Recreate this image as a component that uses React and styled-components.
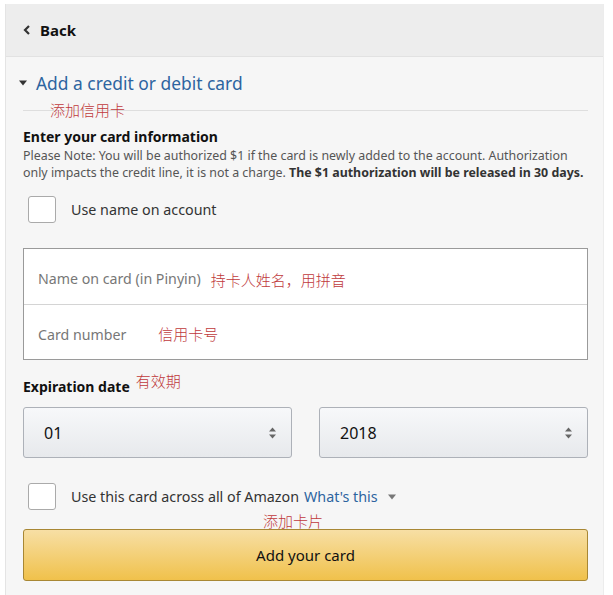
import React from "react";
import styled, { createGlobalStyle } from "styled-components";

const Global = createGlobalStyle`
  html, body { margin: 0; padding: 0; background: #fff; }
  body { font-family: "Noto Sans", "Noto Sans CJK SC", sans-serif; color: #111; }
  * { box-sizing: border-box; }
`;

const Panel = styled.div`
  margin: 4px 0 0 5px;
  width: 599px;
  min-height: 591px;
  background: #f6f6f6;
  border-left: 1px solid #e4e4e4;
  border-right: 1px solid #ececec;
  display: flex;
  flex-direction: column;
`;

const Header = styled.div`
  flex: none;
  height: 53px;
  background: #ededed;
  border-bottom: 1px solid #e2e2e2;
  display: flex;
  align-items: center;
  padding-left: 17px;
  gap: 9px;
  font-size: 15px;
  font-weight: 700;
  color: #111;
`;

const Body = styled.div`
  padding: 0 15px 0 17px;
  display: flex;
  flex-direction: column;
`;

const Title = styled.div`
  margin: 14px 0 0 -4px;
  height: 24px;
  display: flex;
  align-items: center;
  gap: 9px;
  font-size: 17.4px;
  color: #2d64a0;
`;

const Divider = styled.div`
  position: relative;
  margin-top: 15px;
  height: 1px;
  background: #dedede;
`;

const Note = styled.span`
  position: absolute;
  color: #c0393b;
  font-family: "Noto Sans CJK SC", sans-serif;
  font-weight: 300;
  font-size: 15px;
  line-height: 18px;
  white-space: nowrap;
  left: ${(p) => p.$left}px;
  top: ${(p) => p.$top}px;
`;

const InlineNote = styled.span`
  color: #c0393b;
  font-family: "Noto Sans CJK SC", sans-serif;
  font-weight: 300;
  font-size: 15px;
  margin-left: ${(p) => p.$ml}px;
  position: relative;
  top: ${(p) => p.$dy || 0}px;
`;

const SectionHead = styled.div`
  margin-top: ${(p) => (p.$mt === undefined ? 17 : p.$mt)}px;
  font-size: 14px;
  font-weight: 700;
  line-height: 18px;
  color: #111;
`;

const Fine = styled.p`
  margin: 1px 0 0;
  font-size: 12.4px;
  line-height: 17px;
  color: #555;
  b { color: #333; font-weight: 700; }
`;

const CheckRow = styled.label`
  display: flex;
  align-items: center;
  gap: 15px;
  margin-top: ${(p) => p.$mt}px;
  padding-left: 5px;
  font-size: 14.3px;
  color: #333;
`;

const Box = styled.span`
  width: 28px;
  height: 27px;
  border: 1px solid #aaa;
  border-radius: 3px;
  background: #fff;
  flex: none;
`;

const Link = styled.span`
  color: #2d64a0;
  margin-left: 5px;
`;

const Fields = styled.div`
  margin-top: 25px;
  border: 1px solid #9a9a9a;
  background: #fff;
  display: flex;
  flex-direction: column;
`;

const Field = styled.div`
  height: ${(p) => p.$h}px;
  display: flex;
  align-items: center;
  padding-left: 14px;
  padding-top: ${(p) => p.$pt || 0}px;
  font-size: 14.2px;
  color: #777;
  & + & { border-top: 1px solid #d4d4d4; }
`;

const ExpRow = styled.div`
  margin-top: 15px;
  display: flex;
  align-items: baseline;
`;

const Selects = styled.div`
  margin-top: 11px;
  display: grid;
  grid-template-columns: 269px 269px;
  justify-content: space-between;
`;

const Select = styled.div`
  height: 51px;
  border: 1px solid #adb1b8;
  border-radius: 3px;
  background: linear-gradient(#f7f8fa, #e7e9ec);
  display: flex;
  align-items: center;
  justify-content: space-between;
  padding: 0 14px 0 20px;
  font-size: 16px;
  color: #111;
`;

const ButtonWrap = styled.div`
  position: relative;
  margin-top: 19px;
`;

const Button = styled.div`
  height: 52px;
  border: 1px solid #a88734;
  border-radius: 3px;
  background: linear-gradient(#f7dfa5, #f0c14b);
  display: flex;
  align-items: center;
  justify-content: center;
  font-size: 15px;
  color: #111;
`;

const Arrows = () => (
  <svg width="9" height="12" viewBox="0 0 9 12">
    <path d="M4.5 0.5 L8 4.5 H1 Z" fill="#666" />
    <path d="M4.5 11.5 L8 7.5 H1 Z" fill="#666" />
  </svg>
);

export default function App() {
  return (
    <>
      <Global />
      <Panel>
        <Header>
          <svg width="8" height="10" viewBox="0 0 8 10">
            <path d="M6 1 L2 5 L6 9" stroke="#333" strokeWidth="2.2" fill="none" />
          </svg>
          Back
        </Header>
        <Body>
          <Title>
            <svg width="8" height="6" viewBox="0 0 8 6">
              <path d="M0 0.5 H8 L4 5.5 Z" fill="#333" />
            </svg>
            Add a credit or debit card
          </Title>
          <Divider>
            <Note $left={27} $top={-9}>添加信用卡</Note>
          </Divider>
          <SectionHead>Enter your card information</SectionHead>
          <Fine>
            Please Note: You will be authorized $1 if the card is newly added to the account. Authorization
            only impacts the credit line, it is not a charge. <b>The $1 authorization will be released in 30 days.</b>
          </Fine>
          <CheckRow $mt={15}>
            <Box />
            Use name on account
          </CheckRow>
          <Fields>
            <Field $h={55} $pt={4}>
              Name on card (in Pinyin)
              <InlineNote $ml={10} $dy={1}>持卡人姓名，用拼音</InlineNote>
            </Field>
            <Field $h={55} $pt={4}>
              Card number
              <InlineNote $ml={32} $dy={-1}>信用卡号</InlineNote>
            </Field>
          </Fields>
          <ExpRow>
            <SectionHead as="span" $mt={0}>Expiration date</SectionHead>
            <InlineNote $ml={6} $dy={-5}>有效期</InlineNote>
          </ExpRow>
          <Selects>
            <Select>
              01
              <Arrows />
            </Select>
            <Select>
              2018
              <Arrows />
            </Select>
          </Selects>
          <CheckRow $mt={25}>
            <Box />
            <span>
              Use this card across all of Amazon
              <Link>What's this</Link>
              <svg width="8" height="6" viewBox="0 0 8 6" style={{ marginLeft: 10, verticalAlign: 2 }}>
                <path d="M0 0.5 H8 L4 5.5 Z" fill="#777" />
              </svg>
            </span>
          </CheckRow>
          <ButtonWrap>
            <Note $left={240} $top={-17}>添加卡片</Note>
            <Button>Add your card</Button>
          </ButtonWrap>
        </Body>
      </Panel>
    </>
  );
}
